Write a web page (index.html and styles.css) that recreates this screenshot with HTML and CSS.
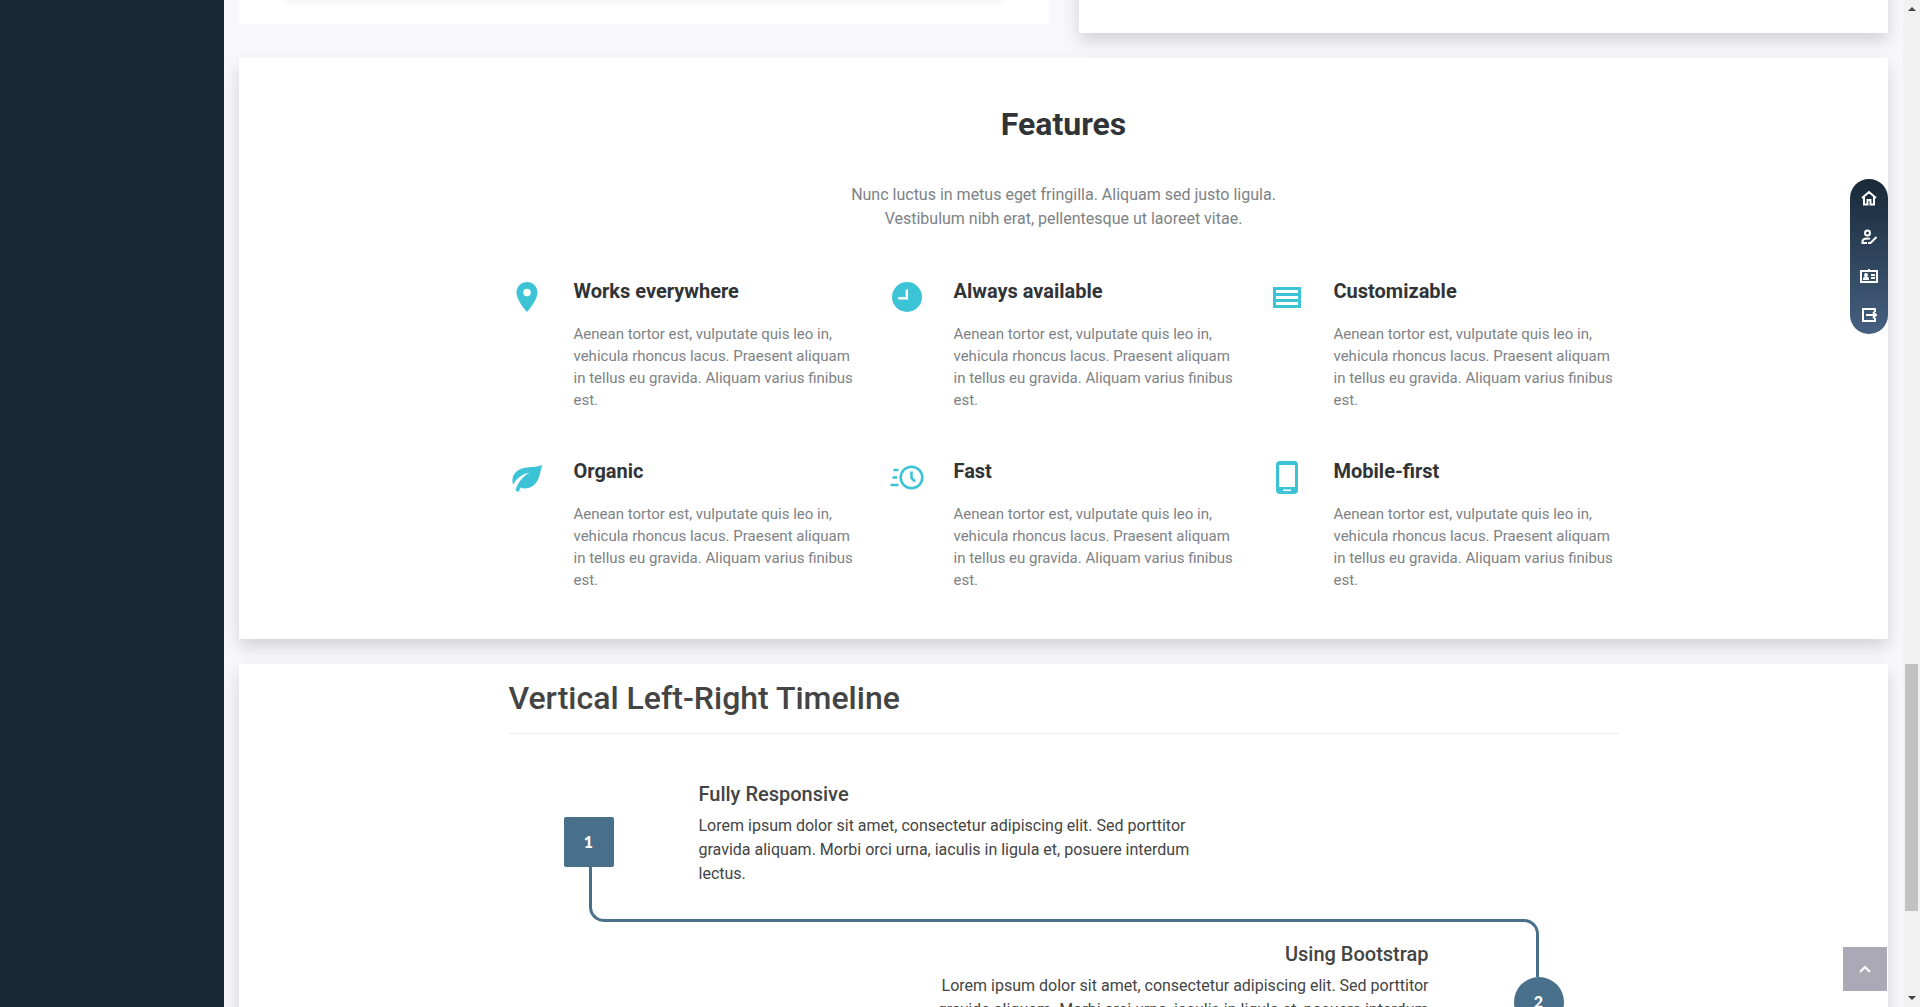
FILE: index.html
```html
<!DOCTYPE html>
<html lang="en">
<head>
<meta charset="utf-8">
<title>Features</title>
<link rel="stylesheet" href="styles.css">
</head>
<body>
<div class="shell">
  <aside class="sidebar"></aside>
  <main class="main">
    <div class="top-row">
      <section class="panel"><div class="panel-inner"></div></section>
      <section class="card"></section>
    </div>

    <section class="card features">
      <div class="container">
        <h2 class="features-title">Features</h2>
        <p class="features-intro">Nunc luctus in metus eget fringilla. Aliquam sed justo ligula.<br>Vestibulum nibh erat, pellentesque ut laoreet vitae.</p>
        <div class="feature-grid">
          <article class="feature">
            <svg class="feature-icon" viewBox="0 0 24 24"><path d="M12 2C8.100 2 5 5.100 5 9c0 5.200 7 13 7 13s7-7.800 7-13c0-3.900-3.100-7-7-7zm0 9.500a2.500 2.500 0 1 1 0-5 2.500 2.500 0 0 1 0 5z"/></svg>
            <div><h3 class="feature-name">Works everywhere</h3><p class="feature-text">Aenean tortor est, vulputate quis leo in, vehicula rhoncus lacus. Praesent aliquam in tellus eu gravida. Aliquam varius finibus est.</p></div>
          </article>
          <article class="feature">
            <svg class="feature-icon" viewBox="0 0 24 24"><circle cx="12" cy="12" r="10"/><path class="cut" d="M11.900 7v5.800H6.200"/></svg>
            <div><h3 class="feature-name">Always available</h3><p class="feature-text">Aenean tortor est, vulputate quis leo in, vehicula rhoncus lacus. Praesent aliquam in tellus eu gravida. Aliquam varius finibus est.</p></div>
          </article>
          <article class="feature">
            <svg class="feature-icon" viewBox="0 0 36 36"><path fill-rule="evenodd" d="M4 8h28v21H4zM7 11v3h22v-3zM7 17v3h22v-3zM7 23v3h22v-3z"/></svg>
            <div><h3 class="feature-name">Customizable</h3><p class="feature-text">Aenean tortor est, vulputate quis leo in, vehicula rhoncus lacus. Praesent aliquam in tellus eu gravida. Aliquam varius finibus est.</p></div>
          </article>
          <article class="feature">
            <svg class="feature-icon" viewBox="0 0 36 36"><path d="M33.500 6C24 9.500 13 6.500 7 13 3 17 3 21.500 4 25.500 8 19 13 15 20.500 13.500 13 18 8.500 24 6.500 31.500L9.500 33 11.500 28.500C17 31 24 28.500 28 22.500 31.500 17 31 11 33.500 6z"/></svg>
            <div><h3 class="feature-name">Organic</h3><p class="feature-text">Aenean tortor est, vulputate quis leo in, vehicula rhoncus lacus. Praesent aliquam in tellus eu gravida. Aliquam varius finibus est.</p></div>
          </article>
          <article class="feature">
            <svg class="feature-icon line" viewBox="0 0 36 36"><circle cx="22.500" cy="18.500" r="10.800"/><path d="M22.500 12.500v6.500l3.500 3.500M4.500 11h5M3.500 18.500h4.500M1.500 26h8"/></svg>
            <div><h3 class="feature-name">Fast</h3><p class="feature-text">Aenean tortor est, vulputate quis leo in, vehicula rhoncus lacus. Praesent aliquam in tellus eu gravida. Aliquam varius finibus est.</p></div>
          </article>
          <article class="feature">
            <svg class="feature-icon" viewBox="0 0 36 36"><path fill-rule="evenodd" d="M11 2h14a4 4 0 0 1 4 4v25a4 4 0 0 1-4 4H11a4 4 0 0 1-4-4V6a4 4 0 0 1 4-4zM10 6v22h16V6zM14 30.500v1.500h8v-1.500z"/></svg>
            <div><h3 class="feature-name">Mobile-first</h3><p class="feature-text">Aenean tortor est, vulputate quis leo in, vehicula rhoncus lacus. Praesent aliquam in tellus eu gravida. Aliquam varius finibus est.</p></div>
          </article>
        </div>
      </div>
    </section>

    <section class="card timeline">
      <div class="container">
        <h2 class="timeline-title">Vertical Left-Right Timeline</h2>
        <div class="steps">
          <div class="step">
            <div class="marker"><span class="badge square">1</span><span class="stem below"></span></div>
            <div class="step-body">
              <h3 class="step-name">Fully Responsive</h3>
              <p class="step-text">Lorem ipsum dolor sit amet, consectetur adipiscing elit. Sed porttitor gravida aliquam. Morbi orci urna, iaculis in ligula et, posuere interdum lectus.</p>
            </div>
          </div>
          <div class="connector"><span class="bend-left"></span><span class="bend-right"></span></div>
          <div class="step step-end">
            <div class="step-body">
              <h3 class="step-name">Using Bootstrap</h3>
              <p class="step-text">Lorem ipsum dolor sit amet, consectetur adipiscing elit. Sed porttitor gravida aliquam. Morbi orci urna, iaculis in ligula et, posuere interdum lectus.</p>
            </div>
            <div class="marker"><span class="stem above"></span><span class="badge circle">2</span></div>
          </div>
        </div>
      </div>
    </section>
  </main>

  <div class="scrollbar" aria-hidden="true">
    <svg class="arrow" viewBox="0 0 17 17"><path d="M5 11l4-4 4 4z"/></svg>
    <span class="track-before"></span>
    <span class="thumb"></span>
    <span class="track-after"></span>
    <svg class="arrow" viewBox="0 0 17 17"><path d="M5 6h8l-4 4z"/></svg>
  </div>
</div>

<nav class="quick-nav" aria-label="Quick links">
  <a href="#home" aria-label="Home"><svg viewBox="0 0 18 18"><path d="M2 9l7-6 7 6M4 8v7.500h3.500V11h3v4.500H14V8"/></svg></a>
  <a href="#account" aria-label="Edit account"><svg viewBox="0 0 18 18"><circle cx="7.500" cy="5" r="2.500"/><path d="M7 15H2.500v-1.500c0-2 2.500-3 5-3 1 0 2 0 2.500.300M8 15h2.500l6-6"/></svg></a>
  <a href="#card" aria-label="Contact card"><svg viewBox="0 0 18 18"><path d="M1 4h16v11H1zM9 2v2M11 8h4M11 11h4M4 12c0-2 4-2 4 0z"/><circle cx="6" cy="8" r="1"/></svg></a>
  <a href="#logout" aria-label="Sign out"><svg viewBox="0 0 18 18"><path d="M15 6V3H3v12h12v-3M6 9h10M13 6l3 3-3 3"/></svg></a>
</nav>
<button class="to-top" type="button" aria-label="Back to top"><svg viewBox="0 0 18 18"><path d="M4 12l5-5 5 5"/></svg></button>
</body>
</html>
```
FILE: styles.css
```css
* { box-sizing: border-box; }

body {
  margin: 0;
  height: 100vh;
  overflow: hidden;
  background: #f7f7fc;
  color: #444;
  font-family: Roboto, "Liberation Sans", sans-serif;
  font-size: 16px;
  line-height: 24px;
}

h2, h3, p { margin: 0; }

.shell {
  display: grid;
  grid-template-columns: 224px minmax(0, 1fr) 17px;
  height: 100vh;
}

.sidebar { background: #182938; }

.main {
  padding: 0 15px;
  overflow: hidden;
}

.card {
  background: #fff;
  box-shadow: 0 8px 16px rgba(0, 0, 0, 0.15);
}

/* Lower end of the row that is scrolled past the top edge */
.top-row {
  display: grid;
  grid-template-columns: 1fr 1fr;
  gap: 30px;
  align-items: start;
  margin: -40px 0 25px;
}

.top-row .card { height: 73px; }

.panel {
  padding: 0 48px 24px;
  background: #fff;
}

.panel-inner {
  height: 38px;
  margin-bottom: 2px;
  box-shadow: 0 2px 8px rgba(0, 0, 0, 0.1);
}

.container {
  max-width: 1140px;
  margin: 0 auto;
  padding: 0 15px;
}

.features {
  position: relative;
  margin-bottom: 25px;
  padding: 47px 0 48px;
}

.features-title {
  margin-bottom: 40px;
  color: #313437;
  font-size: 32px;
  font-weight: 700;
  line-height: 38px;
  text-align: center;
}

.features-intro {
  margin-bottom: 48px;
  color: #7d8285;
  text-align: center;
}

.feature-grid {
  display: grid;
  grid-template-columns: repeat(3, 1fr);
  gap: 48px 30px;
}

.feature {
  display: grid;
  grid-template-columns: 36px 1fr;
  gap: 29px;
}

.feature-icon {
  width: 36px;
  height: 36px;
  fill: #3cc4d6;
}

.feature-icon .cut {
  fill: none;
  stroke: #fff;
  stroke-width: 1.6;
}

.feature-icon.line {
  fill: none;
  stroke: #3cc4d6;
  stroke-width: 2.6;
}

.feature-name {
  margin-bottom: 20px;
  color: #313437;
  font-size: 20px;
  font-weight: 700;
  line-height: 24px;
}

.feature-text {
  color: #7d8285;
  font-size: 15px;
  line-height: 22px;
}

.timeline {
  position: relative;
  padding: 15px 0 48px;
}

.timeline-title {
  margin-bottom: 48px;
  padding-bottom: 16px;
  border-bottom: 1px solid #ececee;
  font-size: 32px;
  font-weight: 500;
  line-height: 38px;
}

.steps { margin: 0 -15px; }

.step {
  display: grid;
  grid-template-columns: 2fr 6fr 4fr;
}

.step-end {
  grid-template-columns: 6fr 2fr;
  margin-left: calc(100% / 3);
  text-align: right;
}

.step-body { padding: 0 15px 16px; }

.step-name {
  margin-bottom: 8px;
  font-size: 20px;
  font-weight: 500;
  line-height: 24px;
}

.marker {
  display: grid;
  grid-template-rows: 1fr 50px 1fr;
  justify-items: center;
}

.badge {
  grid-row: 2;
  width: 50px;
  background: #49708a;
  color: #fff;
  font-family: Lato, Roboto, sans-serif;
  font-weight: 900;
  line-height: 50px;
  text-align: center;
}

.square { border-radius: 2px; }
.circle { border-radius: 50%; }

.stem {
  width: 50%;
  border: 0 solid #49708a;
}

.below {
  grid-row: 3;
  justify-self: end;
  border-left-width: 3px;
}

.above {
  grid-row: 1;
  justify-self: start;
  border-right-width: 3px;
}

.connector {
  display: grid;
  grid-template-columns: 1fr 1fr;
  height: 40px;
  padding: 0 calc(100% / 12);
}

.bend-left {
  height: 20px;
  border: solid #49708a;
  border-width: 0 0 3px 3px;
  border-bottom-left-radius: 15px;
}

.bend-right {
  margin-top: 17px;
  border: solid #49708a;
  border-width: 3px 3px 0 0;
  border-top-right-radius: 15px;
}

.scrollbar {
  display: flex;
  flex-direction: column;
  align-items: center;
  background: #f1f1f1;
}

.arrow {
  width: 17px;
  height: 17px;
  fill: #444;
}

.track-before { flex: 647; }
.track-after { flex: 79; }

.thumb {
  flex: 247;
  width: 13px;
  background: #c1c1c1;
}

.quick-nav {
  position: fixed;
  top: 179px;
  right: 32px;
  display: flex;
  flex-direction: column;
  justify-content: space-between;
  width: 38px;
  height: 155px;
  padding: 10px;
  border-radius: 19px;
  background: linear-gradient(#182938, #466080);
}

.quick-nav a { height: 18px; }

.quick-nav svg, .to-top svg {
  display: block;
  width: 18px;
  height: 18px;
  fill: none;
  stroke: #fff;
  stroke-width: 2;
}

.to-top {
  position: fixed;
  right: 33px;
  bottom: 16px;
  display: grid;
  place-items: center;
  width: 44px;
  height: 44px;
  padding: 0;
  border: 0;
  background: #aca9b6;
}
```
